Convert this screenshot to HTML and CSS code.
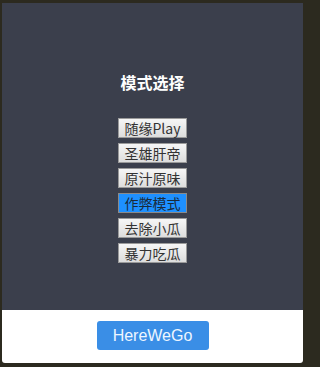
FILE: index.html
```html
<!DOCTYPE html>
<html lang="zh">
<head>
<meta charset="utf-8">
<link rel="stylesheet" href="styles.css">
</head>
<body>
<div class="frame">
  <div class="panel">
    <h1 class="title">模式选择</h1>
    <div class="modes">
      <button class="mode">随缘Play</button>
      <button class="mode">圣雄肝帝</button>
      <button class="mode">原汁原味</button>
      <button class="mode active">作弊模式</button>
      <button class="mode">去除小瓜</button>
      <button class="mode">暴力吃瓜</button>
    </div>
  </div>
  <div class="footer">
    <button class="go">HereWeGo</button>
  </div>
</div>
</body>
</html>
```
FILE: styles.css
```css
html, body {
  margin: 0;
  padding: 0;
  background: #2c2a1f;
  width: 307px;
  height: 367px;
  overflow: hidden;
}
.frame {
  margin: 3px 4px 4px 2px;
  display: flex;
  flex-direction: column;
}
.panel {
  background: #3b3f4c;
  height: 307px;
  display: flex;
  flex-direction: column;
  align-items: center;
  padding-top: 69px;
  box-sizing: border-box;
}
.title {
  margin: 0;
  color: #ffffff;
  font-family: "Noto Sans CJK SC", sans-serif;
  font-size: 16px;
  font-weight: bold;
  line-height: 20px;
}
.modes {
  margin-top: 26px;
  display: flex;
  flex-direction: column;
  align-items: center;
  gap: 5px;
}
.mode {
  width: 69px;
  height: 20px;
  box-sizing: border-box;
  padding: 0;
  border: 1px solid #9a9a9a;
  border-radius: 0;
  background: linear-gradient(#f6f6f6, #dddddd);
  color: #333333;
  font-family: "Noto Sans CJK SC", sans-serif;
  font-size: 14px;
  line-height: 18px;
}
.mode.active {
  background: #1e90ff;
  border-color: #8a8a8a;
  color: #1a2a3a;
}
.footer {
  background: #ffffff;
  height: 53px;
  border-radius: 0 0 3px 3px;
  display: flex;
  justify-content: center;
  padding-top: 11px;
  box-sizing: border-box;
}
.go {
  width: 112px;
  height: 29px;
  border: none;
  border-radius: 3px;
  background: #3a8ee6;
  color: #eef6ff;
  font-family: "Liberation Sans", Arial, sans-serif;
  font-size: 16px;
  padding: 0;
}
```
